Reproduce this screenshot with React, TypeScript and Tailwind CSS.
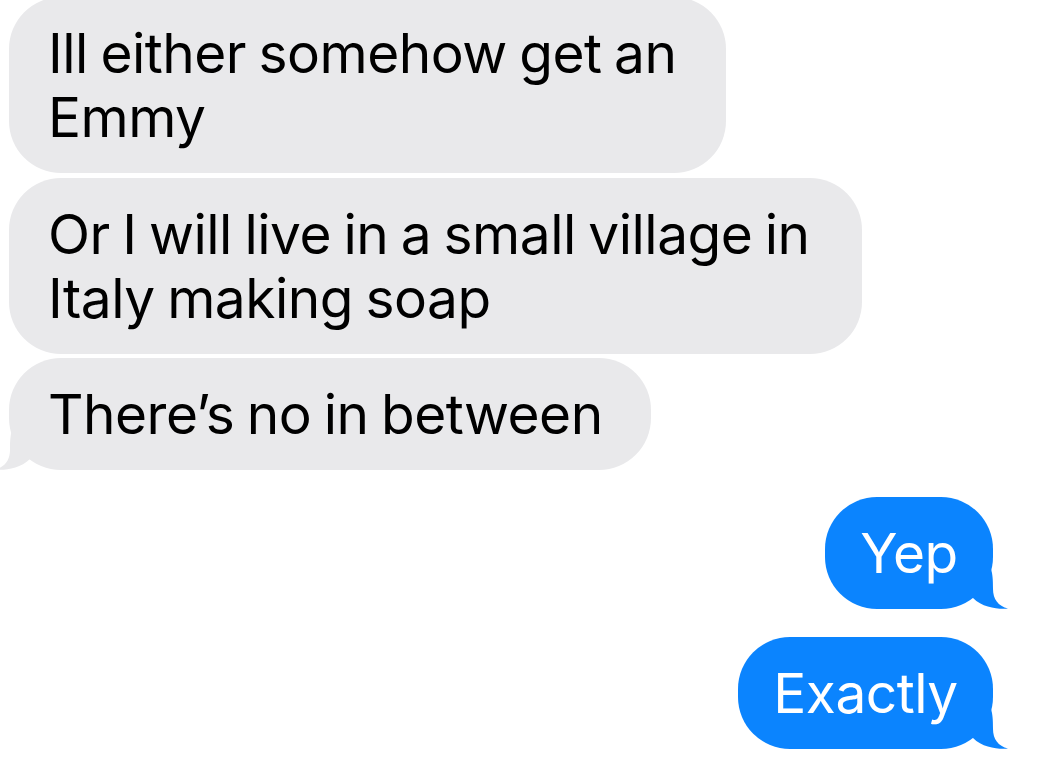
import React from "react";

function TailLeft() {
  return (
    <svg
      className="absolute left-[-15px] bottom-0 w-[40px] h-[40px]"
      viewBox="0 0 40 40"
      aria-hidden="true"
    >
      <path
        d="M36 0 L18 0 C16.5 5 16 10 16 20 C16 30 11 37 1 39.6 C10 40.5 26 39 36 29 Z"
        fill="#e9e9eb"
      />
    </svg>
  );
}

function TailRight() {
  return (
    <svg
      className="absolute right-[-16px] bottom-0 w-[40px] h-[40px]"
      viewBox="0 0 40 40"
      aria-hidden="true"
    >
      <path
        d="M4 0 L22 0 C23.5 5 24 10 24 20 C24 30 29 37 39 39.6 C30 40.5 14 39 4 29 Z"
        fill="#0b84fe"
      />
    </svg>
  );
}

function Received({
  children,
  w,
  tail,
  extra = "",
}: {
  children: React.ReactNode;
  w: string;
  tail?: boolean;
  extra?: string;
}) {
  return (
    <div className={`relative ${w} ${extra} rounded-[52px] bg-[#e9e9eb] pl-[39px] pr-[20px] py-[24px] text-black`}>
      <div className="relative z-10">{children}</div>
      {tail && <TailLeft />}
    </div>
  );
}

function Sent({ children, w }: { children: React.ReactNode; w: string }) {
  return (
    <div className={`relative ${w} self-end rounded-[52px] bg-[#0b84fe] py-[24px] text-white flex justify-center`}>
      <div className="relative z-10">{children}</div>
      <TailRight />
    </div>
  );
}

export default function App() {
  return (
    <div
      className="w-[1041px] h-[770px] overflow-hidden bg-white"
      style={{ fontFamily: "Inter, 'Noto Sans', sans-serif" }}
    >
      <div className="flex flex-col pl-[9px] pr-[48px] text-[55px] leading-[64px] tracking-[-0.5px] [word-spacing:-2.5px]">
        <Received w="w-[717px]" extra="mt-[-3px]">
          Ill either somehow get an
          <br />
          Emmy
        </Received>
        <div className="h-[5px]" />
        <Received w="w-[853px]">
          Or I will live in a small village in
          <br />
          Italy making soap
        </Received>
        <div className="h-[4px]" />
        <Received w="w-[642px]" tail>
          There’s no in between
        </Received>
        <div className="h-[27px]" />
        <Sent w="w-[168px]">Yep</Sent>
        <div className="h-[28px]" />
        <Sent w="w-[255px]">Exactly</Sent>
      </div>
    </div>
  );
}
